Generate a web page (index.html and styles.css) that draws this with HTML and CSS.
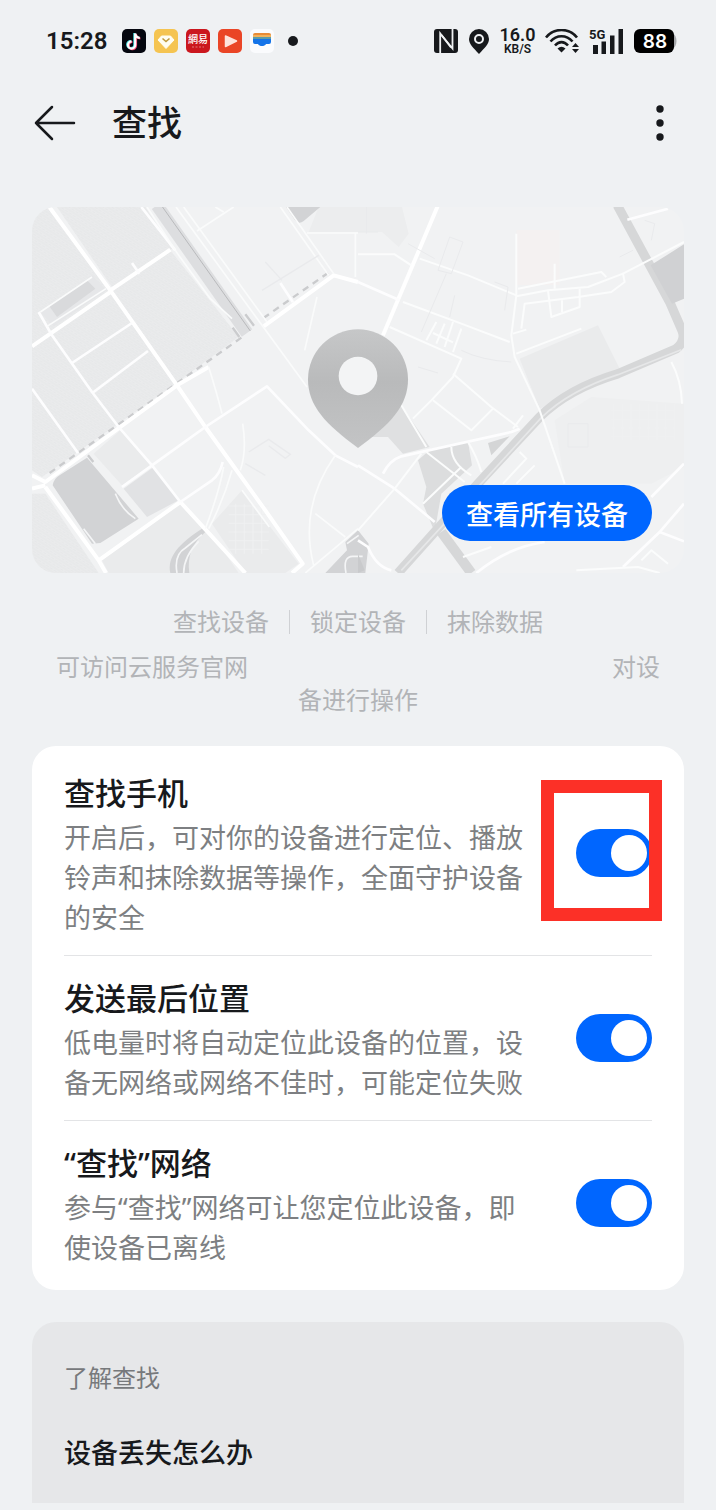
FILE: index.html
```html
<!DOCTYPE html>
<html lang="zh-CN">
<head>
  <meta charset="UTF-8" />
  <meta name="viewport" content="width=device-width, initial-scale=1.0"/>
  <title>查找</title>
  <link rel="stylesheet" href="styles.css">
</head>
<body>

  <div class="status-bar">
    <div class="status-left">
      <span class="clock">15:28</span>
      <svg width="24" height="24" viewBox="0 0 24 24">
        <rect width="24" height="24" rx="5" fill="#05070f"/>
        <g fill="none" stroke-width="2.2">
          <path d="M12.400 4v11.600a3.600 3.600 0 1 1-3.600-3.600M12.400 4c.3 2.700 2 4.300 4.600 4.500" stroke="#4de8ea"/>
          <path d="M14 5v11.600a3.600 3.600 0 1 1-3.600-3.600M14 5c.3 2.700 2 4.300 4.400 4.500" stroke="#f4436c"/>
          <path d="M13.200 4.400V16a3.600 3.600 0 1 1-3.600-3.600M13.200 4.400c.3 2.700 2 4.300 4.600 4.500" stroke="#fff"/>
        </g>
      </svg>
      <svg width="24" height="24" viewBox="0 0 24 24">
        <rect width="24" height="24" rx="5" fill="#f5c451"/>
        <path d="M7.500 7h9L20 11l-8 8.500L4 11z" fill="#fffdf0" stroke="#fffdf0" stroke-linejoin="round"/>
        <path d="M8.500 9.500L12 12.500l3.500-3" fill="none" stroke="#bf9a3d" stroke-width="1.600"/>
      </svg>
      <svg width="24" height="24" viewBox="0 0 24 24">
        <rect width="24" height="24" rx="5" fill="#cb171e"/>
        <text x="12" y="14" text-anchor="middle" class="app-name">網易</text>
        <path d="M6 18h12" stroke="#e07a7a" stroke-dasharray="2 1.500"/>
      </svg>
      <svg width="24" height="24" viewBox="0 0 24 24">
        <rect width="24" height="24" rx="5" fill="#ea4526"/>
        <path d="M7.500 7v10.500L18.500 12z" fill="#fde3dc" stroke="#fde3dc" stroke-width="1.500" stroke-linejoin="round"/>
      </svg>
      <svg width="24" height="24" viewBox="0 0 24 24">
        <rect width="24" height="24" rx="5" fill="#fafbfd"/>
        <path d="M3 6a2 2 0 0 1 2-2h14a2 2 0 0 1 2 2z" fill="#e88a35"/>
        <path d="M3 6h18v2H3z" fill="#f1b25c"/>
        <path d="M3 8h18v2H3z" fill="#5d9aa5"/>
        <path d="M3 10h18v3a2 2 0 0 1-2 2h-3c-1.500 2.800-6.500 2.800-8 0H5a2 2 0 0 1-2-2z" fill="#1473e8"/>
      </svg>
      <svg width="38" height="24" viewBox="0 0 38 24"><circle cx="11" cy="12" r="5" fill="#17191c"/></svg>
    </div>
    <div class="status-right">
      <svg width="24" height="24" viewBox="0 0 24 24">
        <rect width="24" height="24" rx="3" fill="#17191c"/>
        <path d="M6.200 24V4.500L17 18.500" fill="none" stroke="#eff1f3" stroke-width="1.800"/>
        <path d="M18.500 0v19.500L7.500 6" fill="none" stroke="#eff1f3" stroke-width="1.800"/>
      </svg>
      <svg width="22" height="26" viewBox="0 0 22 26">
        <path d="M11 1a10 10 0 0 1 10 10c0 5-4 8.500-10 15C5 19.500 1 16 1 11A10 10 0 0 1 11 1z" fill="#17191c"/>
        <circle cx="11" cy="11" r="4" fill="#17191c" stroke="#eff1f3" stroke-width="2"/>
      </svg>
      <span class="speed"><b>16.0</b><small>KB/S</small></span>
      <svg width="34" height="24" viewBox="0 0 34 24">
        <g fill="none" stroke="#17191c" stroke-width="2.600">
          <path d="M1 8.500C9-1.500 24-1.500 32 8.500"/>
          <path d="M5.500 12.500c6-7 16-7 22 0"/>
          <path d="M10 16.500c4-4.500 9-4.500 13 0"/>
        </g>
        <path d="M12.500 19.500q4-3.500 8 0l-4 4z" fill="#17191c"/>
        <path d="M27 18l3.500-4 3.500 4zM27 20l3.500 4 3.500-4z" fill="#17191c"/>
      </svg>
      <svg width="35" height="26" viewBox="0 0 35 26">
        <text x="0" y="11" class="network">5G</text>
        <path d="M4 17h5v9H4zM12.500 13.500h4.500V26h-4.500zM21 7.500h4.500V26H21zM29.500 1H34v25h-4.500z" fill="#17191c"/>
      </svg>
      <svg width="44" height="24" viewBox="0 0 44 24">
        <path d="M38 4c6 2 6 14 0 16z" fill="#a5a7aa"/>
        <rect width="40" height="24" rx="6" fill="#000"/>
        <text x="21" y="19" text-anchor="middle" class="battery">88</text>
      </svg>
    </div>
  </div>

  <header>
    <button class="icon-btn" aria-label="返回">
      <svg width="42" height="36" viewBox="0 0 42 36">
        <path d="M18 2L2 18l16 16M2 18h38" fill="none" stroke="#17191c" stroke-width="2.500" stroke-linecap="round" stroke-linejoin="round"/>
      </svg>
    </button>
    <h1>查找</h1>
    <button class="icon-btn more" aria-label="更多">
      <svg width="8" height="36" viewBox="0 0 8 36" fill="#17191c">
        <circle cx="4" cy="4" r="3.700"/><circle cx="4" cy="18" r="3.700"/><circle cx="4" cy="32" r="3.700"/>
      </svg>
    </button>
  </header>

  <main>
    <section class="map">
      <svg class="map-art" viewBox="0 0 1956 1098">
        <defs>
          <linearGradient id="pin" x1="0" y1="0" x2="0" y2="1">
            <stop offset="0" stop-color="#c6c7c8"/>
            <stop offset="0.450" stop-color="#b9babb"/>
            <stop offset="1" stop-color="#c3c4c5"/>
          </linearGradient>
          <pattern id="grain" width="14" height="14" patternUnits="userSpaceOnUse" patternTransform="rotate(33)">
            <path d="M0 3h8M5 10h9M11 0v5" stroke="#e3e4e6" stroke-width="2"/>
          </pattern>
          <pattern id="grid" width="26" height="26" patternUnits="userSpaceOnUse">
            <path d="M0 13h26M13 0v26" stroke="#eff0f1" stroke-width="3"/>
          </pattern>
        </defs>
        <rect width="1956" height="1098" fill="#f1f2f3"/>

        <!-- west side -->
        <g fill="#eaebec">
          <path d="M0 0H50L235 250 415 130 620 390 430 530 30 810 0 790z"/>
          <path d="M75 0H340L420 125 240 240z"/>
          <path d="M0 860H40L200 1098H0z"/>
          <path d="M185 740L265 670 355 775 270 835zM210 1060L445 890 560 1010 620 1098H230z"/>
          <path d="M540 950L630 850 800 1070 760 1098H640z"/>
        </g>
        <g fill="url(#grain)">
          <path d="M0 0H50L235 250 415 130 620 390 430 530 30 810 0 790z"/>
          <path d="M75 0H340L420 125 240 240zM0 860H40L200 1098H0z"/>
        </g>
        <path d="M590 890h120v150H590z" fill="url(#grid)"/>
        <path d="M860 0h250l20 80-30 40-50-45H830z" fill="#ecedee"/>

        <path d="M25 315L180 205 222 250 65 358z" fill="#e6e7e9"/>
        <path d="M50 295L165 220 190 245 75 330z" fill="#d9dadc"/>
        <path d="M275 845L365 780 440 880 345 930z" fill="#e1e2e4"/>
        <g fill="#d2d3d5">
          <path d="M62 835Q64 815 85 803L165 752 320 935 205 1008 180 1010z"/>
          <path d="M762 0H865L815 42Q800 54 788 38z"/>
          <path d="M415 1098C405 1050 440 1010 510 965L520 975C480 1010 465 1050 472 1098z"/>
          <path d="M880 1098L945 1030 940 1005 978 970 1010 1010 1000 1098z"/>
        </g>
        <g fill="none" stroke="#f4f5f6" stroke-width="5">
          <path d="M435 1098q-10-55 25-75l50-40M455 1098q0-50 45-95M942 1098q-10-50 20-50h30M945 1010l35-25"/>
          <path d="M250 860q20 50 60 75M155 965l35 45"/>
        </g>

        <!-- railway -->
        <path d="M375 -5L645 378" stroke="#dddee0" stroke-width="38"/>
        <path d="M388 -5L655 372" stroke="#b9babc" stroke-width="3"/>
        <path d="M602 362l20 28M640 322l26 34M168 745l16 20" stroke="#cbccce" stroke-width="7"/>
        <path d="M888 198L690 336M628 392L50 800" stroke="#cacbcd" stroke-width="7" stroke-dasharray="20 16"/>

        <g fill="none" stroke="#fff" stroke-width="12" stroke-linejoin="round">
          <path d="M52 0L235 250 435 535M235 250L415 128M0 418L235 255"/>
          <path d="M978 225L905 205 695 358M530 480L435 535 40 825 0 805M0 845L40 835"/>
          <path d="M435 535L520 660 700 910 812 1070 780 1098M40 840L200 1060 222 1098M200 1060L445 885M445 885L640 1098"/>
        </g>
        <g fill="none" stroke="#fdfdfe" stroke-width="8" stroke-linejoin="round">
          <path d="M20 315L60 385 180 555 260 660 360 775 445 885M120 468L300 348M185 555L348 432M0 545L138 738"/>
          <path d="M270 840L360 775 520 660 705 538 830 670 910 745 978 780M445 885L540 820Q565 800 572 765"/>
          <path d="M300 168l22 32M745 228l38 58M328 0L430 130"/>
        </g>
        <g fill="none" stroke="#fafbfb" stroke-width="5" stroke-linejoin="round">
          <path d="M345 0L440 145 535 275 600 335M432 0L690 355 825 540M455 0L705 345M495 72L605 0M550 0l25 15"/>
          <path d="M745 0L890 205M765 0L905 200M825 78H978M970 78V210M855 270L818 430"/>
          <path d="M530 480Q555 560 570 620M632 650Q645 730 625 790M600 790Q575 880 530 965M575 780Q560 860 520 965"/>
          <path d="M910 745Q800 900 845 1075M850 920L940 990M820 1098L978 965M630 850L712 960M25 315L180 210M45 358L222 245"/>
        </g>
        <path d="M700 165l50 55M690 250L860 145M650 735l60-38 65 45-15 12-50-38M640 770l60 35" fill="none" stroke="#e9eaec" stroke-width="4"/>

        <!-- east side -->
        <g transform="translate(978 0)">
          <path d="M485 455L720 355 785 485 545 605z" fill="#eaebec"/>
          <path d="M590 640L700 570 978 590V780L880 830H620z" fill="#eeeff0"/>
          <path d="M760 590h190v110H760z" fill="url(#grid)"/>
          <path d="M475 70H605V235H475z" fill="#f4f1f1"/>
          <path d="M130 595L215 720 135 740 90 690 40 690z" fill="#dfe0e1"/>
          <path d="M180 760L220 725 330 705 342 775 250 860 230 975 195 890 205 840z" fill="#dcddde"/>
          <path d="M390 708L455 688 400 745z" fill="#d4d5d6"/>
          <path d="M0 1040l20 50-20 8z" fill="#c9cacc"/>

          <g fill="none" stroke="#d6d7d8">
            <path d="M778 -5L935 285 972 370Q985 400 955 425L780 500Q630 545 545 630L360 830 120 1098" stroke-width="28"/>
            <path d="M250 975L340 1098" stroke-width="30"/>
          </g>
          <path d="M878 175L978 112V275L942 290z" fill="#d0d1d3"/>
          <path d="M970 428L780 503Q635 550 550 632L365 835 130 1090" fill="none" stroke="#e6e7e8" stroke-width="5"/>

          <path d="M240 -5L75 385" stroke="#fff" stroke-width="12"/>
          <g fill="none" stroke="#fdfdfe" stroke-width="8" stroke-linejoin="round">
            <path d="M0 225L125 280M0 775L110 845 230 945M355 1098Q450 1020 560 1005M880 870L978 770M795 1080L905 975 978 890"/>
            <path d="M0 1000L30 1020Q55 1080 100 1090M75 800Q95 760 130 748L460 675 485 665M905 975l73 28M808 38L930 5"/>
          </g>
          <g fill="none" stroke="#fbfcfc" stroke-width="6" stroke-linejoin="round">
            <path d="M0 142H110L160 175M185 155L330 205 475 265M135 285L310 350 455 405M95 360L310 455 285 510 220 580 165 635"/>
            <path d="M475 80V265L460 385 470 450 545 610 620 830M475 440L670 365"/>
            <path d="M480 245L730 195 745 210M475 268L570 250 690 240 795 200 800 225 760 255 660 270 500 290 490 365"/>
            <path d="M590 170V245M570 250l10 80 85-30V245M612 280v35M465 380l40-12M795 200L978 105"/>
            <path d="M235 345L205 400M260 350L235 410M285 345L260 420M310 365L285 435M225 378l60 28"/>
            <path d="M285 500L400 600 480 660M225 580L340 670 405 605M465 665l30-40M130 595L205 720"/>
            <path d="M190 740L110 845 0 970M205 735L320 825M280 720q0 50 60 85M330 705q25 40 40 90"/>
            <path d="M485 735l20 20-70 75M530 775l-55 55M310 780L195 890M315 1050L400 1020M655 1090L840 1080 905 1098M850 1060l30-30 50 40M940 465Q970 520 972 590"/>
          </g>
          <g fill="none" stroke="#e9eaec" stroke-width="3">
            <path d="M275 90l40 15-35 95-40-10zM150 110l80 45M265 200L190 375M290 265l-15 65M410 225l40 15-10 70M860 40l30 10-10 50"/>
            <path d="M310 430q60 30 150 35M180 480l60 18M785 150l40-20M630 650h60v70h-60zM0 75h60M25 0v80"/>
          </g>
        </g>

        <!-- location pin -->
        <path d="M978 367a150 150 0 0 1 150 150c0 80-52 134-150 206-98-72-150-126-150-206a150 150 0 0 1 150-150z" fill="url(#pin)"/>
        <circle cx="978" cy="507" r="58" fill="#f3f4f5"/>
      </svg>
      <button class="view-all">查看所有设备</button>
    </section>

    <ul class="features">
      <li>查找设备</li>
      <li>锁定设备</li>
      <li>抹除数据</li>
    </ul>
    <div class="note">
      <div class="note-line"><span>可访问云服务官网</span><span>对设</span></div>
      <div>备进行操作</div>
    </div>

    <section class="card">
      <div class="row">
        <label class="info" for="find-phone">
          <span class="row-title">查找手机</span>
          <span class="desc">开启后，可对你的设备进行定位、播放铃声和抹除数据等操作，全面守护设备的安全</span>
        </label>
        <input type="checkbox" role="switch" class="switch" id="find-phone" checked>
        <div class="highlight"></div>
      </div>
      <div class="row">
        <label class="info" for="last-location">
          <span class="row-title">发送最后位置</span>
          <span class="desc">低电量时将自动定位此设备的位置，设备无网络或网络不佳时，可能定位失败</span>
        </label>
        <input type="checkbox" role="switch" class="switch" id="last-location" checked>
      </div>
      <div class="row">
        <label class="info" for="find-network">
          <span class="row-title">“查找”网络</span>
          <span class="desc">参与“查找”网络可让您定位此设备，即使设备已离线</span>
        </label>
        <input type="checkbox" role="switch" class="switch" id="find-network" checked>
      </div>
    </section>

    <section class="learn">
      <h2>了解查找</h2>
      <a href="#">设备丢失怎么办</a>
    </section>
  </main>

</body>
</html>
```
FILE: styles.css
```css
* {
  box-sizing: border-box;
}

body {
  font-family: "Noto Sans", "Noto Sans CJK SC", sans-serif;
  background: #eff1f3;
  color: #17191c;
  margin: 0;
}

h1, h2, ul {
  margin: 0;
  padding: 0;
}

button {
  font-family: inherit;
  border: none;
  cursor: pointer;
}

svg {
  display: block;
}

.status-bar {
  display: flex;
  justify-content: space-between;
  align-items: center;
  height: 82px;
  padding: 0 38px 0 46px;
}

.status-left {
  display: flex;
  align-items: center;
  gap: 8px;
}

.clock {
  font-family: Roboto, sans-serif;
  font-size: 24px;
  font-weight: 600;
  margin-right: 7px;
}

.app-name {
  font-family: "Noto Sans CJK TC", sans-serif;
  font-size: 10px;
  font-weight: 500;
  fill: #fff;
}

.status-right {
  display: flex;
  align-items: center;
  gap: 10px;
}

.speed {
  display: flex;
  flex-direction: column;
  align-items: center;
  width: 35px;
  font-family: Roboto, sans-serif;
  font-weight: 600;
}

.speed b {
  font-size: 18px;
  font-weight: 600;
  line-height: 16px;
}

.speed small {
  font-size: 12px;
  line-height: 12px;
}

.network {
  font-family: Roboto, sans-serif;
  font-size: 13px;
  font-weight: 700;
  fill: #17191c;
}

.battery {
  font-family: Inter, sans-serif;
  font-size: 19px;
  font-weight: 600;
  fill: #fff;
}

header {
  display: flex;
  align-items: center;
  height: 82px;
  padding: 0 52px 0 34px;
}

header h1 {
  flex: 1;
  margin-left: 36px;
  font-size: 35px;
  font-weight: 500;
  line-height: 48px;
}

.icon-btn {
  background: none;
  padding: 0;
}

main {
  padding: 43px 32px 0;
}

.map {
  position: relative;
  border-radius: 24px;
  overflow: hidden;
}

.map-art {
  width: 100%;
  height: auto;
}

.view-all {
  position: absolute;
  right: 32px;
  bottom: 32px;
  height: 56px;
  padding: 0 24px;
  border-radius: 28px;
  background: #0066ff;
  color: #fff;
  font-size: 27px;
  font-weight: 500;
}

.features {
  display: flex;
  justify-content: center;
  align-items: center;
  margin-top: 33px;
  list-style: none;
  color: #b2b4b7;
  font-size: 24px;
  line-height: 32px;
}

.features li {
  display: flex;
  align-items: center;
}

.features li + li::before {
  content: '';
  width: 1px;
  height: 24px;
  margin: 0 20px;
  background: #cfd1d4;
}

.note {
  margin-top: 12px;
  padding: 0 24px;
  color: #b2b4b7;
  font-size: 24px;
  line-height: 33px;
  text-align: center;
}

.note-line {
  display: flex;
  justify-content: space-between;
}

.card {
  margin-top: 30px;
  padding: 5px 32px;
  background: #fff;
  border-radius: 24px;
}

.row {
  position: relative;
  display: flex;
  align-items: center;
  justify-content: space-between;
  gap: 40px;
  padding: 17px 0;
}

.row + .row {
  border-top: 1px solid #e3e4e6;
}

.info {
  flex: 1;
}

.row-title {
  display: block;
  font-size: 31px;
  font-weight: 500;
  line-height: 50px;
}

.desc {
  display: block;
  color: #7d7f82;
  font-size: 27px;
  line-height: 40px;
}

.switch {
  appearance: none;
  flex: none;
  display: flex;
  align-items: center;
  width: 76px;
  height: 48px;
  margin: 0;
  padding: 0 5px;
  border-radius: 24px;
  background: #c8cacd;
  cursor: pointer;
}

.switch::before {
  content: '';
  width: 36px;
  height: 36px;
  border-radius: 50%;
  background: #fff;
}

.switch:checked {
  background: #0066ff;
  justify-content: flex-end;
}

/* frame drawn over the first switch */
.highlight {
  position: absolute;
  top: 29px;
  right: -10px;
  width: 121px;
  height: 141px;
  border: 13px solid #fc3027;
  pointer-events: none;
}

.learn {
  margin: 32px 0 7px;
  padding: 38px 32px 29px;
  background: #e6e7e9;
  border-radius: 24px 24px 0 0;
}

.learn h2 {
  color: #77797c;
  font-size: 24px;
  font-weight: 400;
  line-height: 36px;
}

.learn a {
  display: block;
  margin-top: 36px;
  color: #17191c;
  font-size: 27px;
  font-weight: 500;
  line-height: 42px;
  text-decoration: none;
}
```
